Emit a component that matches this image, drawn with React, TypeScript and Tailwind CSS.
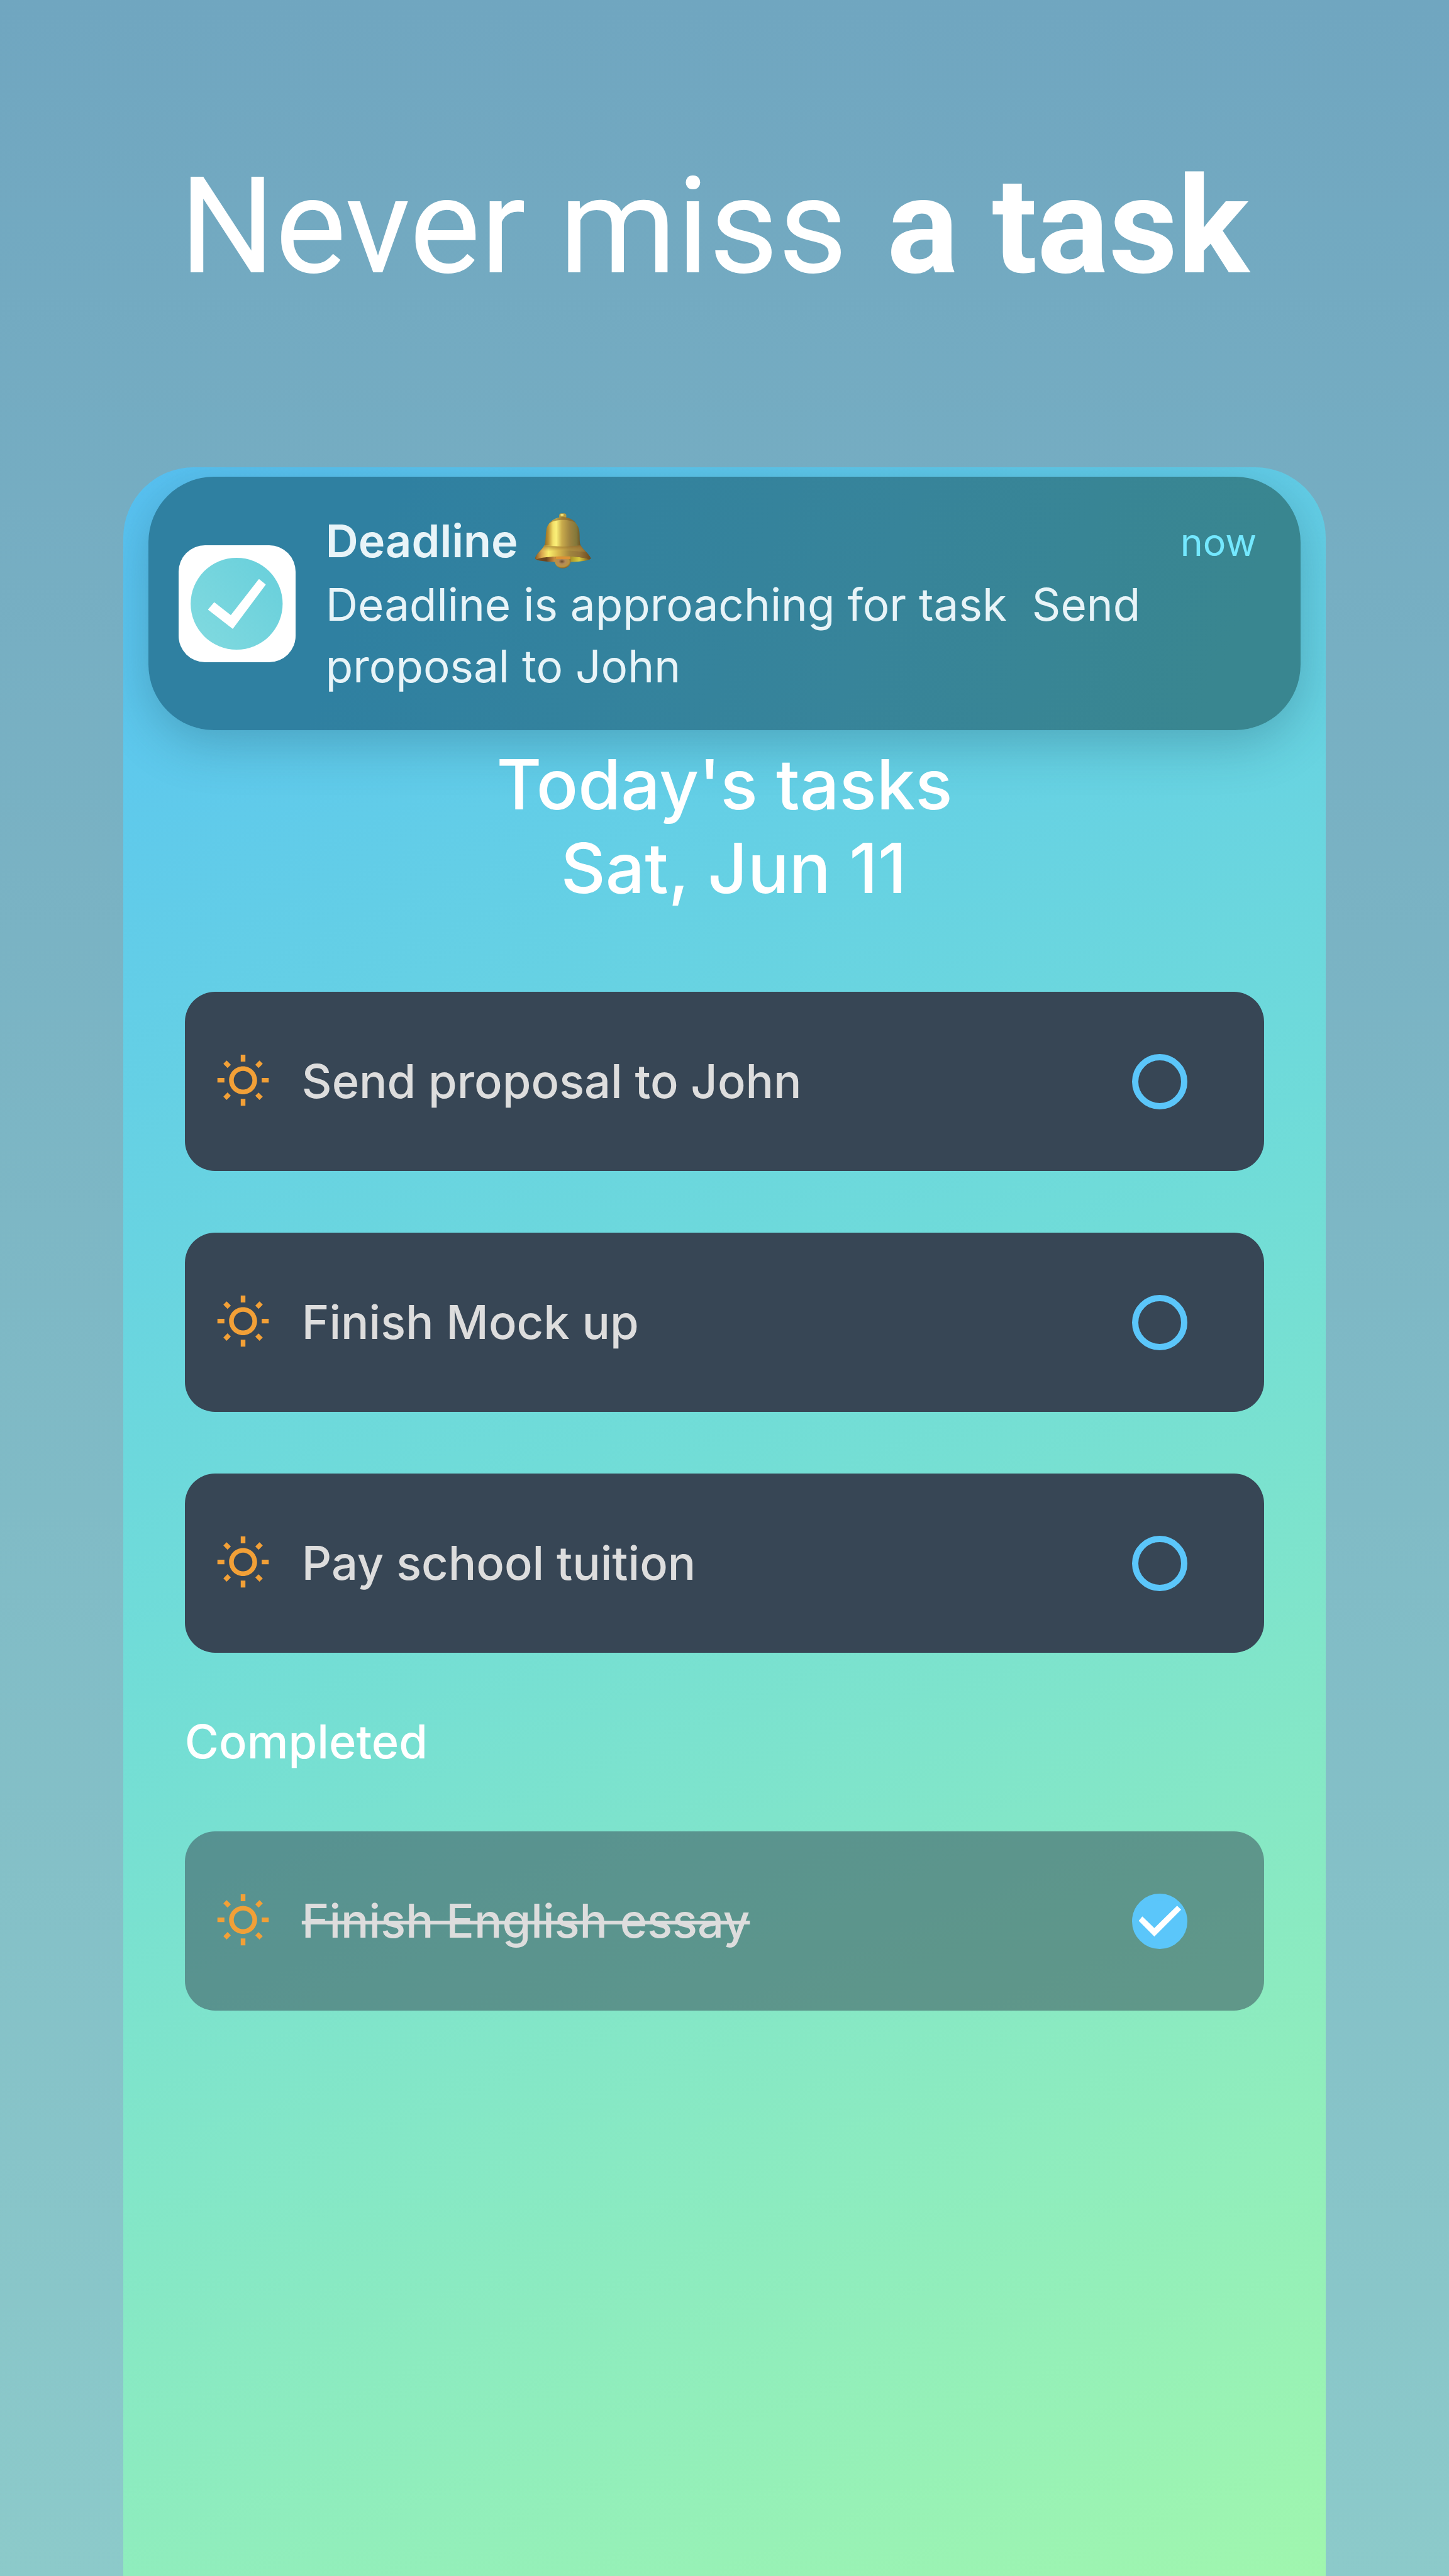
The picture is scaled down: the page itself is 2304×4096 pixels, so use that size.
import { useState } from "react";
import { MdOutlineWbSunny } from "react-icons/md";

type Task = { id: string; title: string; done: boolean };

const initialTasks: Task[] = [
  { id: "proposal", title: "Send proposal to John", done: false },
  { id: "mockup", title: "Finish Mock up", done: false },
  { id: "tuition", title: "Pay school tuition", done: false },
  { id: "essay", title: "Finish English essay", done: true },
];

function Bell() {
  return (
    <svg viewBox="0 0 126 124" className="h-[88px] w-[89px] shrink-0" role="img" aria-label="bell">
      <defs>
        <linearGradient id="bellBody" x1="0" x2="1" y1="0" y2="0">
          <stop offset="0.14" stopColor="#7d5a20" />
          <stop offset="0.24" stopColor="#bd9536" />
          <stop offset="0.32" stopColor="#f3e06a" />
          <stop offset="0.38" stopColor="#fbf078" />
          <stop offset="0.48" stopColor="#c9ab4c" />
          <stop offset="0.62" stopColor="#9f8440" />
          <stop offset="0.74" stopColor="#83783a" />
          <stop offset="0.82" stopColor="#6a5222" />
        </linearGradient>
        <linearGradient id="bellSkirt" x1="0" x2="1" y1="0" y2="0">
          <stop offset="0" stopColor="#8a5a22" />
          <stop offset="0.12" stopColor="#dba850" />
          <stop offset="0.24" stopColor="#faee6c" />
          <stop offset="0.42" stopColor="#d8b84c" />
          <stop offset="0.62" stopColor="#a1853e" />
          <stop offset="0.8" stopColor="#94743a" />
          <stop offset="1" stopColor="#6d4a1c" />
        </linearGradient>
        <linearGradient id="bellShade" x1="0" x2="0" y1="0" y2="1">
          <stop offset="0" stopColor="#8a6428" stopOpacity="0.75" />
          <stop offset="0.5" stopColor="#b98f3c" stopOpacity="0.35" />
          <stop offset="1" stopColor="#f8ea70" stopOpacity="0" />
        </linearGradient>
        <linearGradient id="bellRim" x1="0" x2="1" y1="0" y2="0">
          <stop offset="0" stopColor="#7d5220" />
          <stop offset="0.2" stopColor="#6a4420" />
          <stop offset="0.36" stopColor="#d09040" />
          <stop offset="0.64" stopColor="#a89428" />
          <stop offset="0.8" stopColor="#d8cb3c" />
          <stop offset="1" stopColor="#6b4c1e" />
        </linearGradient>
        <radialGradient id="bellClapper" cx="0.45" cy="0.4" r="0.6">
          <stop offset="0" stopColor="#6a4a2c" />
          <stop offset="0.35" stopColor="#b58a58" />
          <stop offset="0.75" stopColor="#bb9440" />
          <stop offset="1" stopColor="#84602a" />
        </radialGradient>
      </defs>
      <rect x="54" y="0" width="16" height="12" rx="5" fill="#b89a40" />
      <rect x="57" y="1" width="7" height="5" rx="2" fill="#f0e27a" />
      <ellipse cx="62" cy="102" rx="62" ry="8" fill="url(#bellRim)" />
      <path
        d="M62 8C45 10 28 19 25 38C23 52 24 63 21 72C15 83 2 91 0 101C1 104 4 104 7 102C35 95 90 95 117 102C122 104 125 104 125 101C121 91 108 83 102 72C99 63 101 52 99 38C95 19 79 10 62 8Z"
        fill="url(#bellBody)"
      />
      <path
        d="M21 72C15 83 2 91 0 101C1 104 4 104 7 102C35 95 90 95 117 102C122 104 125 104 125 101C121 91 108 83 102 72C78 75 45 75 21 72Z"
        fill="url(#bellSkirt)"
      />
      <path d="M21 72C45 76 78 76 102 72C106 79 112 84 116 89C85 82 38 82 8 89C13 83 18 78 21 72Z" fill="url(#bellShade)" />
      <path d="M62 8C50 10 38 14 32 22C46 13 78 12 92 22C86 14 74 9 62 8Z" fill="#7d5a22" opacity="0.55" />
      <path d="M45 98H79L80 108C79 118 72 124 62 124C52 124 45 118 44 108Z" fill="url(#bellClapper)" />
      <path d="M46 97H79V103H46Z" fill="#dc9236" />
    </svg>
  );
}

function AppIcon() {
  return (
    <svg viewBox="0 0 262 262" className="h-[186px] w-[186px] shrink-0 rounded-[42px] bg-white" aria-hidden="true">
      <defs>
        <linearGradient id="disc" x1="0.1" x2="0.9" y1="0.9" y2="0.3">
          <stop offset="0" stopColor="#7fd9df" />
          <stop offset="1" stopColor="#6cd1dc" />
        </linearGradient>
      </defs>
      <circle cx="130" cy="131" r="103" fill="url(#disc)" />
      <path
        d="M67 144L80 129L117 158L180 77L194 88L121 186Z"
        fill="white"
        stroke="white"
        strokeWidth="2"
        strokeLinejoin="round"
      />
    </svg>
  );
}

function Notification() {
  return (
    <section
      aria-label="Notification"
      className="mx-10 flex items-center gap-[48px] rounded-[104px] bg-linear-[110deg] from-[#2f80a1] from-20% via-[#37849a] via-62% to-[#398690] to-92% py-[53px] pr-[70px] pl-[48px] text-[#e8f4f8] shadow-[0_20px_80px_rgba(30,80,100,0.32)]"
    >
      <AppIcon />
      <div className="min-w-0 flex-1">
        <div className="flex h-[98px] items-center justify-between">
          <h2 className="flex items-center gap-[27px] text-[72px] leading-[98px] font-semibold">
            Deadline
            <Bell />
          </h2>
          <time className="pt-[4px] text-[61px] leading-[98px] text-[#74e8ff]">now</time>
        </div>
        <p className="mt-[3px] max-w-[1340px] text-[71px] leading-[98px] whitespace-pre-wrap">
          {"Deadline is approaching for task  Send proposal to John"}
        </p>
      </div>
    </section>
  );
}

function TaskCard({ task, onToggle }: { task: Task; onToggle: () => void }) {
  return (
    <li>
      <label
        className={
          task.done
            ? "flex h-[285px] items-center gap-[49px] rounded-[48px] bg-[#374655]/51 pr-[122px] pl-[48px]"
            : "flex h-[285px] items-center gap-[49px] rounded-[48px] bg-[#374655] pr-[122px] pl-[48px]"
        }
      >
        <MdOutlineWbSunny className="size-[89px] shrink-0 text-[#f2a037]" aria-hidden="true" />
        <span
          className={
            task.done
              ? "flex-1 pb-[2px] text-[74px] leading-[96px] font-medium text-[#dddddd] line-through decoration-[6px]"
              : "flex-1 pb-[2px] text-[74px] leading-[96px] font-medium text-[#dddddd]"
          }
        >
          {task.title}
        </span>
        <span className="grid size-[88px] shrink-0">
          <input
            type="checkbox"
            checked={task.done}
            onChange={onToggle}
            className="col-start-1 row-start-1 size-[88px] appearance-none rounded-full border-[10px] border-[#5bc6fa] checked:bg-[#5bc6fa]"
          />
          {task.done && (
            <svg viewBox="0 0 124 124" className="pointer-events-none col-start-1 row-start-1 size-[88px]" aria-hidden="true">
              <path d="M15 61L23 51L50 77L101 27L110 36L50 96Z" fill="white" />
            </svg>
          )}
        </span>
      </label>
    </li>
  );
}

export default function App() {
  const [tasks, setTasks] = useState(initialTasks);
  const toggle = (id: string) =>
    setTasks((list) => list.map((t) => (t.id === id ? { ...t, done: !t.done } : t)));
  const open = tasks.filter((t) => !t.done);
  const completed = tasks.filter((t) => t.done);

  return (
    <div className="flex min-h-screen flex-col bg-linear-to-b from-[#70a6c0] to-[#8ccaca] font-['Inter',sans-serif]">
      <h1 className="pt-[232px] pr-[32px] pb-[255px] text-center font-['Roboto',sans-serif] text-[213px] leading-[256px] text-white">
        Never miss <b className="ml-[10px] font-bold">a task</b>
      </h1>
      <main className="mx-[8.5%] flex flex-1 flex-col overflow-hidden rounded-t-[112px] bg-linear-[157deg] from-[#58c2f3] via-[#70dcd8] via-45% to-[#a0f6ae] pt-[15px]">
        <Notification />
        <header className="mt-[20px] text-center text-[110px] leading-[133px] font-medium whitespace-pre text-white">
          <h2>Today's tasks</h2>
          <p className="[font-kerning:none]">{" Sat, Jun 11"}</p>
        </header>
        <ul className="mx-[98px] mt-[130px] flex flex-col gap-[98px]">
          {open.map((t) => (
            <TaskCard key={t.id} task={t} onToggle={() => toggle(t.id)} />
          ))}
        </ul>
        <h3 className="mx-[98px] mt-[93px] text-[74px] leading-[96px] font-medium text-white">Completed</h3>
        <ul className="mx-[98px] mt-[95px] flex flex-col gap-[98px]">
          {completed.map((t) => (
            <TaskCard key={t.id} task={t} onToggle={() => toggle(t.id)} />
          ))}
        </ul>
      </main>
    </div>
  );
}
